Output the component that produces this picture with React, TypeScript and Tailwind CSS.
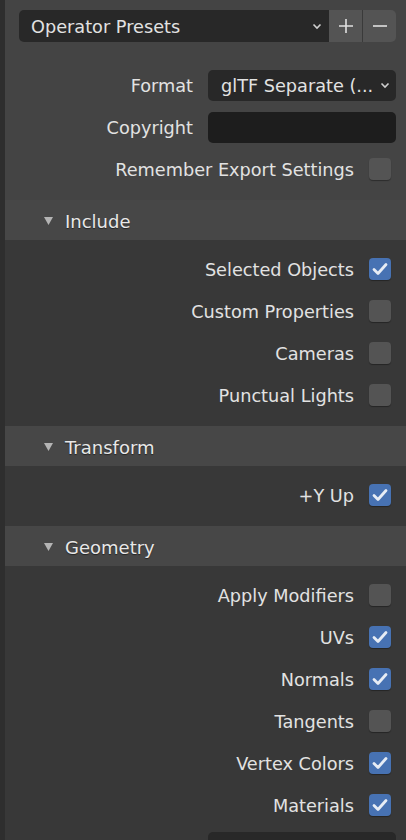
import React from "react";

const font = { fontFamily: '"DejaVu Sans", "Noto Sans", sans-serif' };

function Check({ on }: { on: boolean }) {
  return (
    <div
      className={`flex h-[22px] w-[22px] shrink-0 items-center justify-center rounded-[4px] ${
        on ? "bg-[#4772b3]" : "bg-[#545454]"
      } shadow-[0_1px_1px_rgba(0,0,0,0.35)]`}
    >
      {on && (
        <svg width="22" height="22" viewBox="0 0 22 22">
          <path
            d="M5 11.5 L9 15.5 L17 6.5"
            fill="none"
            stroke="#e6ecf5"
            strokeWidth="2.8"
            strokeLinecap="round"
            strokeLinejoin="round"
          />
        </svg>
      )}
    </div>
  );
}

function CheckRow({ label, on }: { label: string; on: boolean }) {
  return (
    <div className="flex h-[42px] shrink-0 items-center justify-end gap-[15px] pr-[15px]">
      <span className="translate-y-[1px] text-[17.7px] text-[#e2e2e2]">{label}</span>
      <Check on={on} />
    </div>
  );
}

function Chevron() {
  return (
    <svg width="10" height="7" viewBox="0 0 10 7">
      <path d="M1.5 1.5 L5 5 L8.5 1.5" fill="none" stroke="#cfcfcf" strokeWidth="1.6" />
    </svg>
  );
}

function Header({ title }: { title: string }) {
  return (
    <div className="flex h-[40px] shrink-0 items-center bg-[#474747] pl-[39px]">
      <svg width="9" height="8" viewBox="0 0 9 8" className="mt-[1px]">
        <path d="M0 0 H9 L4.5 8 Z" fill="#b4b4b4" />
      </svg>
      <span className="ml-[12px] translate-y-[1px] text-[18px] text-[#e8e8e8] [text-shadow:0_1px_1px_rgba(0,0,0,0.5)]">
        {title}
      </span>
    </div>
  );
}

function FieldRow({ label, children }: { label: string; children: React.ReactNode }) {
  return (
    <div className="flex h-[42px] shrink-0 items-center pr-[10px]">
      <span className="w-[203px] shrink-0 translate-y-[1px] pr-[15px] text-right text-[17.7px] text-[#e2e2e2]">
        {label}
      </span>
      {children}
    </div>
  );
}

export default function App() {
  return (
    <div className="flex h-[840px] w-[406px] overflow-hidden bg-[#2b2b2b]" style={font}>
      <div className="w-[5px] shrink-0 bg-[#2e2e2e]" />
      <div className="flex flex-1 flex-col">
        {/* top */}
        <div className="h-[200px] shrink-0 bg-[#444444] pt-[10px]">
          <div className="ml-[14px] mr-[10px] flex h-[32px]">
            <div className="flex flex-1 items-center justify-between rounded-l-[5px] bg-[#282828] pl-[12px] pr-[7px]">
              <span className="translate-y-[1px] text-[17.7px] text-[#e2e2e2]">Operator Presets</span>
              <Chevron />
            </div>
            <div className="flex w-[33px] items-center justify-center bg-[#545454]">
              <svg width="16" height="16" viewBox="0 0 16 16">
                <path d="M8 1 V15 M1 8 H15" stroke="#e0e0e0" strokeWidth="1.6" />
              </svg>
            </div>
            <div className="w-[1px] bg-[#3a3a3a]" />
            <div className="flex w-[33px] items-center justify-center rounded-r-[5px] bg-[#545454]">
              <svg width="16" height="16" viewBox="0 0 16 16">
                <path d="M1 8 H15" stroke="#e0e0e0" strokeWidth="1.6" />
              </svg>
            </div>
          </div>
          <div className="mt-[22px]">
            <FieldRow label="Format">
              <div className="flex h-[31px] flex-1 items-center justify-between rounded-[5px] bg-[#282828] pl-[13px] pr-[6px]">
                <span className="translate-y-[1px] text-[17.7px] text-[#e2e2e2]">glTF Separate (...</span>
                <Chevron />
              </div>
            </FieldRow>
            <FieldRow label="Copyright">
              <div className="h-[31px] flex-1 rounded-[5px] bg-[#1d1d1d]" />
            </FieldRow>
            <CheckRow label="Remember Export Settings" on={false} />
          </div>
        </div>

        <Header title="Include" />
        <div className="shrink-0 bg-[#383838] pb-[10px] pt-[8px]">
          <CheckRow label="Selected Objects" on />
          <CheckRow label="Custom Properties" on={false} />
          <CheckRow label="Cameras" on={false} />
          <CheckRow label="Punctual Lights" on={false} />
        </div>

        <Header title="Transform" />
        <div className="shrink-0 bg-[#383838] pb-[10px] pt-[8px]">
          <CheckRow label="+Y Up" on />
        </div>

        <Header title="Geometry" />
        <div className="shrink-0 bg-[#383838] pt-[8px] pb-[20px]">
          <CheckRow label="Apply Modifiers" on={false} />
          <CheckRow label="UVs" on />
          <CheckRow label="Normals" on />
          <CheckRow label="Tangents" on={false} />
          <CheckRow label="Vertex Colors" on />
          <CheckRow label="Materials" on />
          <FieldRow label="">
            <div className="h-[31px] flex-1 rounded-[5px] bg-[#282828]" />
          </FieldRow>
        </div>
      </div>
    </div>
  );
}
